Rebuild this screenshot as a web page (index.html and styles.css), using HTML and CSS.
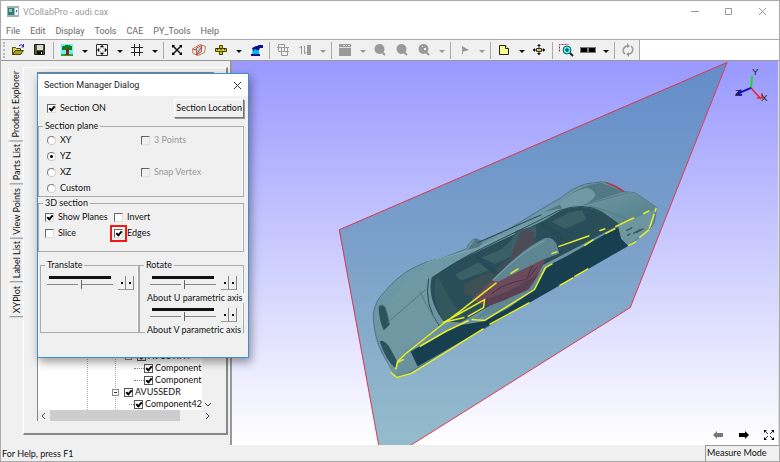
FILE: index.html
```html
<!DOCTYPE html>
<html lang="en">
<head>
<meta charset="utf-8">
<title>VCollabPro - audi.cax</title>
<link rel="stylesheet" href="styles.css">
</head>
<body>
<header class="titlebar">
  <svg class="app-icon" width="12" height="11" viewBox="0 0 12 11"><path fill="#9fb0bd" d="M0 0h12v11H0z"/><path fill="#2f7f78" d="M1 2h6v7H1z"/><path fill="#8fd0b0" d="M2 3h3v3H2z"/><path fill="#fff" d="M8 2h3v7H8z"/><path fill="#557" d="M9 4h1v2H9z"/></svg>
  <h1 class="app-title">VCollabPro - audi.cax</h1>
  <button class="win-btn" aria-label="Minimize"><svg width="9" height="9" viewBox="0 0 9 9"><path d="M1 4.500h8"/></svg></button>
  <button class="win-btn" aria-label="Maximize"><svg width="9" height="9" viewBox="0 0 9 9"><path d="M1.500 1.500h6v6h-6z"/></svg></button>
  <button class="win-btn" aria-label="Close"><svg width="9" height="9" viewBox="0 0 9 9"><path d="M1 1l7 7M8 1l-7 7"/></svg></button>
</header>
<nav class="menubar">
  <button>File</button><button>Edit</button><button>Display</button><button>Tools</button><button>CAE</button><button>PY_Tools</button><button>Help</button>
</nav>
<div class="toolrow">
<div class="toolbar" role="toolbar">
  <span class="grip"></span>
  <button class="tool" aria-label="Open"><svg width="14" height="14" viewBox="0 0 14 14"><path fill="#d8d060" stroke="#4c4a00" d="M1.500 11.500v-7h3l1 1h4v2h-5z"/><path fill="#a8a020" stroke="#4c4a00" d="M1.500 11.500l3-4h8l-3 4z"/><path fill="none" stroke="#22c" d="M8 3q2-3 4 0M12.500 1v3h-2"/></svg></button>
  <button class="tool" aria-label="Save"><svg width="14" height="14" viewBox="0 0 14 14"><path fill="#55552a" stroke="#222" d="M1.500 1.500h10v10h-10z"/><path fill="#d8d8d8" d="M4 2h6v5H4z"/><path fill="#111" d="M4 8h6v4H4z"/><path fill="#ddd" d="M8 9h1v2H8z"/></svg></button>
  <span class="sep"></span>
  <button class="tool" aria-label="Scene"><svg width="14" height="14" viewBox="0 0 14 14"><path fill="#62f4f4" d="M1 1h12v10H1z"/><path fill="#32a032" d="M1 11h12v2H1z"/><path fill="#177a17" d="M3 3h2V2h5v1h2v4H9V6H6v1H2V4z"/><path fill="#a01818" d="M6 6h3v6H5v-1h1z"/></svg></button>
  <button class="drop" aria-label="Scene options"></button>
  <button class="tool" aria-label="Fit view"><svg width="14" height="14" viewBox="0 0 14 14"><path fill="none" stroke="#333" d="M1.500 1.500h11v11h-11z"/><circle cx="7" cy="7" r="2.500" fill="#fff" stroke="#999"/><path d="M7 2l2 2H5zM7 12l2-2H5zM2 7l2-2v4zM12 7l-2-2v4z"/></svg></button>
  <button class="drop" aria-label="Fit options"></button>
  <button class="tool" aria-label="Grid"><svg width="14" height="14" viewBox="0 0 14 14"><path fill="none" stroke="#222" d="M4.500 1v12M9.500 1v12M1 4.500h12M1 9.500h12"/></svg></button>
  <button class="drop" aria-label="Grid options"></button>
  <span class="sep"></span>
  <button class="tool" aria-label="Explode"><svg width="14" height="14" viewBox="0 0 14 14"><path stroke="#111" stroke-width="1.500" d="M3 3l8 8M11 3l-8 8"/><path d="M2 2h3L2 5zM12 2H9l3 3zM2 12h3l-3-3zM12 12H9l3-3z"/></svg></button>
  <button class="tool" aria-label="Section"><svg width="16" height="14" viewBox="0 0 16 14"><path fill="#f6efdc" stroke="#a9805c" d="M1.500 6L9 1.500l5.500 2-1 6L7 12.500l-5-2z"/><path fill="#8deef4" d="M6 5l5-2v6l-5 3z"/><path fill="none" stroke="#e04040" d="M5.500 5l5-2.500v6l-5 3.500zM1.500 6l4 1M6 11l5-8"/></svg></button>
  <button class="tool" aria-label="Measure"><svg width="14" height="14" viewBox="0 0 14 14"><path fill="#d8d000" stroke="#444000" d="M1.500 5.500h11v3h-11z"/><path fill="#d8d000" stroke="#444000" d="M5.500 2.500h3v3h-3zM5.500 8.500h3v3h-3z"/><path stroke="#222" d="M3.500 5v2M7 5v2M10.500 5v2"/></svg></button>
  <button class="drop" aria-label="Measure options"></button>
  <button class="tool" aria-label="Probe"><svg width="14" height="14" viewBox="0 0 14 14"><path fill="#00b8f0" d="M4 6h6v5H3z"/><path fill="#10108c" d="M3 5l4-2h2V2h5v3h-3l-1 2H8L6 6 4 8zM2 11h9v2H2z"/></svg></button>
  <span class="sep"></span>
  <button class="tool" aria-label="Copy results" disabled><svg width="14" height="14" viewBox="0 0 14 14"><path fill="none" stroke="#9a9a9a" d="M2.500 1.500h6v7h-6zM5.500 4.500h6v8h-6zM1 4.500h12M4 8.500h9"/></svg></button>
  <button class="tool" aria-label="Legend" disabled><svg width="14" height="14" viewBox="0 0 14 14"><path fill="#9a9a9a" d="M9 2h4v10H9z"/><path fill="none" stroke="#9a9a9a" d="M3.500 3v8M6.500 3v8M1.500 5l2-2M6.500 11l2-2"/></svg></button>
  <button class="drop" aria-label="Legend options" disabled></button>
  <span class="sep"></span>
  <button class="tool" aria-label="Calendar" disabled><svg width="14" height="14" viewBox="0 0 14 14"><path fill="#9a9a9a" d="M1 1h12v12H1z"/><path stroke="#ddd" d="M5 2.500h2M8 2.500h1M10 2.500h2M1 4.500h12"/></svg></button>
  <button class="drop" aria-label="Calendar options" disabled></button>
  <button class="tool" aria-label="Find" disabled><svg width="14" height="14" viewBox="0 0 14 14"><circle cx="6.500" cy="6" r="5" fill="#9a9a9a"/><path stroke="#9a9a9a" stroke-width="2" d="M9 9l3 3"/></svg></button>
  <button class="tool" aria-label="Find next" disabled><svg width="14" height="14" viewBox="0 0 14 14"><circle cx="6.500" cy="6" r="5" fill="#9a9a9a"/><path stroke="#9a9a9a" stroke-width="2" d="M9 9l3 3"/></svg></button>
  <button class="tool" aria-label="Find hot spot" disabled><svg width="14" height="14" viewBox="0 0 14 14"><circle cx="6.500" cy="6" r="5" fill="#9a9a9a"/><path stroke="#9a9a9a" stroke-width="2" d="M9 9l3 3"/><path fill="#eee" d="M7 5h2v2H7zM5 3h1v1H5z"/></svg></button>
  <button class="drop" aria-label="Find options" disabled></button>
  <span class="sep"></span>
  <button class="tool" aria-label="Play" disabled><svg width="14" height="14" viewBox="0 0 14 14"><path fill="#9a9a9a" d="M5 3l7 4-7 2zM5 3h1v8H5z"/></svg></button>
  <button class="drop" aria-label="Play options" disabled></button>
  <span class="sep"></span>
  <button class="tool" aria-label="Note"><svg width="14" height="14" viewBox="0 0 14 14"><path fill="#ffff90" stroke="#222" d="M2.500 2.500h6l3 3v6h-9z"/><path fill="#fff" stroke="#222" d="M8.500 2.500v3h3"/></svg></button>
  <button class="drop" aria-label="Note options"></button>
  <button class="tool" aria-label="Move"><svg width="14" height="14" viewBox="0 0 14 14"><path stroke="#222" d="M7 2v10M1 7h12"/><path d="M7 1l2 2H5zM7 12l2-2H5zM1 7l2-2v4zM13 7l-2-2v4z"/><path fill="#d8c850" stroke="#333" d="M4.500 5.500h5v3h-5z"/></svg></button>
  <span class="sep"></span>
  <button class="tool" aria-label="Zoom window"><svg width="16" height="14" viewBox="0 0 16 14"><path fill="none" stroke="#803080" stroke-dasharray="2 1" d="M1.500 8.500v-7h9"/><circle cx="9" cy="7" r="4" fill="#50f0f0" stroke="#186060"/><path stroke="#124" d="M9 5v4M7 7h4"/><path stroke="#102060" stroke-width="2" d="M12 10l3 3"/></svg></button>
  <button class="tool" aria-label="Display bar"><svg width="18" height="14" viewBox="0 0 18 14"><path fill="#777" d="M1 4h16v6H1z"/><path d="M2 5h6v4H2zM10 5h6v4h-6z"/></svg></button>
  <button class="drop" aria-label="Display bar options"></button>
  <span class="sep"></span>
  <button class="tool" aria-label="Refresh" disabled><svg width="14" height="14" viewBox="0 0 14 14"><path fill="none" stroke="#999" stroke-width="1.500" d="M4 11a4.500 4.500 0 0 1 2-8M10 3a4.500 4.500 0 0 1-2 8"/><path fill="#999" d="M6 0l3 3-3 2zM8 9v5l-3-3z"/></svg></button>
</div>
</div>
<main class="workspace">
  <aside class="explorer">
    <div class="tabs" role="tablist">
      <button class="tab tab-active" role="tab">Product Explorer</button>
      <button class="tab" role="tab">Parts List</button>
      <button class="tab" role="tab">View Points</button>
      <button class="tab" role="tab">Label List</button>
      <button class="tab" role="tab">XYPlot</button>
    </div>
    <div class="tabpanel">
      <div class="treebox">
        <div class="tree">
          <div class="node branch"><span class="expander"></span><label><input type="checkbox" checked>AVUSTINT</label></div>
          <div class="node leaf"><label><input type="checkbox" checked>Component</label></div>
          <div class="node leaf"><label><input type="checkbox" checked>Component</label></div>
          <div class="node root"><span class="expander"></span><label><input type="checkbox" checked>AVUSSEDR</label></div>
          <div class="node child"><label><input type="checkbox" checked>Component42</label></div>
        </div>
        <div class="vscroll"><svg width="8" height="6" viewBox="0 0 8 6"><path d="M1 1l3 3 3-3"/></svg></div>
        <div class="hscroll"><svg width="6" height="8" viewBox="0 0 6 8"><path d="M4 1L1 4l3 3"/></svg><span class="thumb"></span><svg width="6" height="8" viewBox="0 0 6 8"><path d="M1 1l3 3-3 3"/></svg></div>
      </div>
    </div>
  </aside>
  <section class="viewport" aria-label="3D view">
    <svg class="scene" viewBox="232 61 547 385" preserveAspectRatio="xMinYMin slice">
      <defs>
        <linearGradient id="plane" x1="0" y1="0" x2="0" y2="1"><stop offset="0" stop-color="#638dca"/><stop offset=".5" stop-color="#7ca1ca"/><stop offset="1" stop-color="#95bccc"/></linearGradient>
        <linearGradient id="body" x1="0" y1="0" x2=".6" y2="1"><stop offset="0" stop-color="#5a8290"/><stop offset=".4" stop-color="#6e98a5"/><stop offset="1" stop-color="#648c98"/></linearGradient>
        <linearGradient id="rear" x1="0" y1="0" x2="1" y2="1"><stop offset="0" stop-color="#7096a4"/><stop offset="1" stop-color="#54808c"/></linearGradient>
      </defs>
      <path fill="url(#plane)" d="M339 230L728 62 631 308 411 446H379z"/>
      <path fill="none" stroke="#e03850" d="M379 446L339.500 230 728 62.500 631 308 411 446"/>
      <path fill="url(#body)" stroke="#456a7a" stroke-width=".8" d="M373.500 315Q375 301 386 291Q397 277 414 268Q427 261 441 259Q455 254 467 249Q470 241 476 239L483 242 510 229 541 210 560 199Q575 187 587 184L603 182 608 183 625 192 636 193Q648 201 657.500 208L655 223 650 230 629 246 500 320 421 367 405 376 396 378Q389 365 382 353Q374 337 373.500 315z"/>
      <path fill="#517985" d="M560 205Q576 186 602 183L625 192 587 204 560 209 545 212zM468 250L476 239 483 243 479 248z"/>
      <path fill="#7199a5" d="M560 204Q572 191 588 188Q604 194 587 204L563 209zM388 307Q405 279 430 268Q425 287 412 304L391 320z"/>
      <path fill="url(#rear)" d="M575 208L625 192 636 193 657 208 648 216 618 226Q600 210 575 208z"/>
      <path fill="#6f98a3" d="M374 314L427 281Q425 310 440 325L402 353 396 378Q375 343 374 314z"/>
      <path fill="#294e59" d="M432 278Q454 262 484 249L544 221 561 211Q581 204 597 210Q610 216 620 225L575 249 552 261 544 265 527 292 491 306 461 323 444 322Q427 300 432 278z"/>
      <path fill="#3a5f64" d="M456 275L478 263 485 261 493 270 461 281zM482 258L501 250Q514 241 516 231L536 226Q540 243 527 251L495 264zM552 222L569 213 583 210 587 220 566 229z"/>
      <path fill="#31595d" d="M439 278Q450 303 465 317L444 321Q432 300 436 280z"/>
      <path fill="#3d5056" d="M465 284L493 272 515 255 520 236 531 230 537 241 526 270 504 281 479 300 464 294z"/>
      <path fill="#4c4b58" d="M520 234Q528 225 535 234L531 254 518 262 508 266z"/>
      <path fill="#6c4a5b" d="M490 283L547 257 542 268 535 286 505 302 485 306 472 300z"/>
      <path fill="#5b4054" d="M480 302L508 292 538 275 534 288 509 300 487 306z"/>
      <path fill="none" stroke="#40364a" d="M533 266l-6 14M537 268l-8 10M492 294q14-11 34-14"/>
      <path fill="none" stroke="#244b57" stroke-width="4" d="M477 258L497 274M542 223L563 239"/>
      <path fill="#5d8692" d="M492 281Q523 249 544 239Q552 236 557 244L560 254 543 260 499 282z"/>
      <path fill="none" stroke="#81a6af" d="M494 280Q523 251 545 241M427 263L479 248 529 225 560 210"/>
      <path fill="none" stroke="#264955" d="M433 279Q454 262 484 248L529 226 559 211Q585 202 602 212L620 225M478 243L542 215M429 279Q424 305 440 327"/>
      <path fill="#173f50" d="M411 352L458 326 483 322 508 309 534 291 547 267 568 256 619 227 622 239 629 246 560 286 500 320 418 367z"/>
      <path fill="#5f8793" d="M490 307L529 290 546 265 553 263 548 267 535 290 502 311 472 321z"/>
      <path fill="#2b535d" d="M379 308Q380 303 386 308L390 325 384 331Q379 320 379 308zM380 342Q384 339 390 348L397 361 396 369Q386 361 380 342z"/>
      <path fill="none" stroke="#547a86" d="M388 323L426 290M381 307Q385 300 389 320M420 292Q429 310 438 324M585 205L629 193M590 206Q626 216 648 230"/>
      <path fill="#6d96a1" d="M619 227L651 211 655 220 650 229 629 246 622 239z"/>
      <path fill="none" stroke="#315965" stroke-width="1.500" d="M627 231l6-3M628 236l3-2M634 234l7-4M637 233l7-4"/>
      <path fill="none" stroke="#bd3045" stroke-width="1.500" d="M607 183L617 187 625 192"/>
      <g fill="none" stroke="#e6ed28" stroke-width="1.500">
        <path d="M396 370L398 362 405 355 440 327 460 312 497 283M511 274l8-5M391 373L397 378 412 374 484 329M490 325L530 303M560 286l14-8M575 277l14-8M398 363l6-3M420 347L446 332 469 321M472 320L485 321 535 290 546 268 553 264M444 323L485 300 484 308 468 317M443 323L465 318M552 254l6-2M559 247L590 236M585 246l9-6M600 231l6-2M606 234l10-5M616 227L635 218M644 214l6-3M657 208l-1 4M655 214l-5 15M629 246l8-4M640 238l10-8"/>
      </g>
      <g fill="none" stroke-width="1.500"><path stroke="#14dc28" stroke-width="2" d="M752 88l1-12"/><path stroke="#e22" d="M752 88l10 11M758 98h5v-5"/><path stroke="#1010c0" stroke-width="2" d="M752 88l-14 6M742 90l-4 4 5 1"/></g>
      <g class="axis"><text x="753" y="75">Y</text><text x="762" y="101">X</text><text x="736" y="96">Z</text></g>
    </svg>
    <div class="viewnav">
      <button aria-label="Previous"><svg width="12" height="10" viewBox="0 0 12 10"><path fill="#777" d="M1 5l4-4v2h6v4H5v2z"/></svg></button>
      <button aria-label="Next"><svg width="12" height="10" viewBox="0 0 12 10"><path d="M11 5L7 1v2H1v4h6v2z"/></svg></button>
      <button aria-label="Full screen"><svg width="10" height="10" viewBox="0 0 10 10"><path d="M0 0h3L0 3zM10 0v3L7 0zM0 10V7l3 3zM10 10H7l3-3z"/><path stroke="#333" d="M1 1l3 3M9 1L6 4M1 9l3-3M9 9L6 6"/></svg></button>
    </div>
  </section>
</main>
<footer class="statusbar"><span>For Help, press F1</span><span class="mode">Measure Mode</span></footer>

<div class="dialog" role="dialog" aria-labelledby="dlg-title">
  <div class="dialog-title"><h2 id="dlg-title">Section Manager Dialog</h2><button aria-label="Close dialog"><svg width="9" height="9" viewBox="0 0 9 9"><path d="M1 1l7 7M8 1l-7 7"/></svg></button></div>
  <div class="dialog-top">
    <label><input type="checkbox" checked>Section ON</label>
    <button class="push">Section Location</button>
  </div>
  <fieldset class="plane-group">
    <legend>Section plane</legend>
    <label><input type="radio" name="plane">XY</label>
    <label class="off"><input type="checkbox" disabled>3 Points</label>
    <label class="first"><input type="radio" name="plane" checked>YZ</label>
    <label class="first"><input type="radio" name="plane">XZ</label>
    <label class="off"><input type="checkbox" disabled>Snap Vertex</label>
    <label class="first"><input type="radio" name="plane">Custom</label>
  </fieldset>
  <fieldset class="section-group">
    <legend>3D section</legend>
    <label><input type="checkbox" checked>Show Planes</label>
    <label><input type="checkbox">Invert</label>
    <label><input type="checkbox">Slice</label>
    <label><span class="highlight"><input type="checkbox" checked></span>Edges</label>
  </fieldset>
  <div class="moves">
    <fieldset class="translate">
      <legend>Translate</legend>
      <div class="slide"><input type="range" aria-label="Translate"><button class="spin" aria-label="Translate back"></button><button class="spin" aria-label="Translate forward"></button></div>
    </fieldset>
    <fieldset class="rotate">
      <legend>Rotate</legend>
      <div class="slide"><input type="range" id="rot-u"><button class="spin" aria-label="U back"></button><button class="spin" aria-label="U forward"></button></div>
      <label class="caption" for="rot-u">About U parametric axis</label>
      <div class="slide"><input type="range" id="rot-v"><button class="spin" aria-label="V back"></button><button class="spin" aria-label="V forward"></button></div>
      <label class="caption" for="rot-v">About V parametric axis</label>
    </fieldset>
  </div>
</div>
</body>
</html>
```
FILE: styles.css
```css
*, *::before, *::after { box-sizing: border-box; }
body {
  margin: 0;
  height: 100vh;
  display: flex;
  flex-direction: column;
  overflow: hidden;
  border: 1px solid #aaa;
  background: #fff;
  color: #111;
  font: 9px/12px Lato, "Liberation Sans", sans-serif;
}
button { font: inherit; color: inherit; background: none; border: 0; padding: 0; }
h1, h2 { margin: 0; font: inherit; }

.titlebar { display: flex; align-items: center; height: 21px; padding-left: 6px; flex: none; }
.app-title { flex: 1; margin-left: 4px; color: #999; font: 9px/14px Roboto, sans-serif; }
.win-btn { width: 34px; height: 21px; }
.win-btn svg { display: block; margin: auto; fill: none; stroke: #999; }

.menubar { display: flex; gap: 10px; height: 17px; padding-left: 5px; flex: none; color: #666; font: 9px/19px Roboto, sans-serif; }

.toolrow { display: flex; flex: none; height: 22px; border-top: 1px solid #aaa; border-bottom: 1px solid #999; }
.toolbar { display: flex; align-items: center; background: #f0f0f0; border-right: 1px solid #aaa; }
.grip { width: 2px; height: 16px; margin: 0 2px; border-left: 2px dotted #bbb; }
.tool { width: 22px; height: 20px; }
.tool svg { display: block; margin: auto; }
.drop { width: 13px; height: 20px; }
.drop::after { content: ""; display: block; width: 6px; margin: 2px auto 0; border: 3px solid transparent; border-top-color: #111; border-bottom: 0; }
.drop:disabled::after { border-top-color: #999; }
.sep { width: 1px; height: 17px; margin: 0 2px; background: #aaa; }

.workspace { flex: 1; display: flex; min-height: 0; }
.explorer { display: flex; flex: none; width: 231px; padding: 6px 2px 10px 7px; background: #f0f0f0; border-right: 2px solid #999; }
.tabs { display: flex; flex-direction: column; align-items: flex-end; width: 15px; flex: none; }
.tab { writing-mode: vertical-rl; transform: rotate(180deg); width: 14px; padding: 3px 0; line-height: 12px; text-align: left; border-top: 1px solid #888; border-right: 1px solid #fff; }
.tab-active { width: 15px; padding-bottom: 4px; }
.tabpanel { flex: 1; padding: 4px 12px 12px 13px; border: solid #fff; border-width: 1px 2px 2px 1px; border-right-color: #888; border-bottom-color: #888; }
.treebox { display: grid; grid-template: 1fr 11px / 1fr 12px; height: 100%; border-left: 1px solid #888; border-top: 1px solid #888; }
.tree { display: flex; flex-direction: column; justify-content: flex-end; min-width: 0; overflow: hidden; background: repeating-linear-gradient(#aaa 0 1px, #fff 1px 2px) 49px 0 / 1px 100% no-repeat, repeating-linear-gradient(#aaa 0 1px, #fff 1px 2px) 77px 0 / 1px 100% no-repeat #fff; }
.node { display: flex; align-items: center; height: 12px; flex: none; white-space: nowrap; }
.node label { display: flex; align-items: center; gap: 2px; }
.branch { padding-left: 87px; }
.leaf { padding-left: 96px; }
.leaf::before { content: ""; width: 10px; flex: none; border-top: 1px dotted #888; }
.root { padding-left: 74px; }
.child { padding-left: 91px; }
.child::before { content: ""; width: 5px; flex: none; border-top: 1px dotted #888; }
.expander { width: 7px; height: 7px; margin-right: 5px; border: 1px solid #888; background: linear-gradient(#333, #333) center / 3px 1px no-repeat #fff; }
.vscroll { display: flex; align-items: flex-end; justify-content: center; padding-bottom: 2px; }
.hscroll { grid-column: 1 / 3; display: flex; align-items: center; justify-content: space-between; padding: 0 3px; gap: 3px; }
.thumb { flex: 1; height: 11px; margin-right: 22px; background: #cdcdcd; }
.vscroll svg, .hscroll svg { flex: none; fill: none; stroke: #444; }

.viewport { position: relative; flex: 1; min-width: 0; overflow: hidden; border-right: 1px solid #ddd; background: linear-gradient(#9999ff, #fff); }
.scene { display: block; width: 100%; height: 100%; }
.axis text { font: 10px "Liberation Sans", sans-serif; fill: #222; }
.viewnav { position: absolute; right: 4px; bottom: 5px; display: flex; align-items: center; gap: 14px; }
.viewnav svg { display: block; }

.statusbar { display: flex; justify-content: space-between; flex: none; height: 16px; padding-left: 1px; background: #f0f0f0; line-height: 18px; }
.mode { width: 74px; padding-left: 1px; border-top: 1px solid #999; border-left: 1px solid #999; line-height: 13px; }

.dialog { position: absolute; left: 37px; top: 73px; width: 212px; padding-bottom: 24px; background: #f0f0f0; border: 1px solid #3a8fd0; box-shadow: 2px 4px 9px rgba(0, 0, 0, .4); }
.dialog-title { display: flex; align-items: center; justify-content: space-between; height: 22px; padding: 0 6px; background: #fff; color: #222; font: 9px/14px Roboto, sans-serif; }
.dialog-title svg { display: block; fill: none; stroke: #333; }
.dialog-top { display: flex; align-items: center; justify-content: space-between; height: 24px; padding: 0 4px 0 9px; }
.dialog label { display: flex; align-items: center; gap: 4px; white-space: nowrap; }
.push { height: 19px; padding: 0 1px; border: 1px solid; border-color: #fff #777 #777 #fff; box-shadow: 1px 1px 0 #999; }

input[type="checkbox"], input[type="radio"] { appearance: none; flex: none; width: 9px; height: 9px; margin: 0; background: #fff; border: 1px solid; border-color: #666 #ddd #ddd #666; }
input[type="radio"] { border-radius: 50%; border-color: #777 #ccc #ccc #777; }
input[type="radio"]:checked { background: radial-gradient(circle, #000 0 1px, #fff 2px); }
input[type="checkbox"]:checked { position: relative; }
input[type="checkbox"]:checked::after { content: ""; position: absolute; left: 2px; top: 0; width: 4px; height: 6px; border: solid #000; border-width: 0 2px 2px 0; transform: rotate(42deg); }
.node input[type="checkbox"] { border-color: #555; }
input[type="checkbox"]:disabled { background: #f0f0f0; }
.off { color: #999; }

fieldset { min-width: 0; margin: 0 4px 0 0; padding: 0; border: 1px solid #aaa; box-shadow: inset -1px 0 0 #fff; }
legend { margin-left: 4px; padding: 0 2px; height: 12px; }
.plane-group { display: grid; grid-template-columns: 94px 1fr; grid-auto-rows: 16px; height: 77px; padding-left: 8px; }
.plane-group legend { margin-left: -4px; }
.first { grid-column: 1; }
.section-group { display: grid; grid-template-columns: 69px 1fr; grid-auto-rows: 16px; height: 55px; padding-left: 6px; }
.section-group legend { margin-left: -2px; }
.highlight { display: flex; margin: 0 -4px; padding: 2px; border: 2px solid #f01818; }

.moves { display: grid; grid-template-columns: 99px 1fr; margin: 7px 4px 0 2px; }
.moves fieldset { height: 74px; margin: 0; }
.slide { display: flex; align-items: center; height: 22px; padding: 2px 0 0 6px; }
.rotate .slide { padding-left: 10px; }
.slide input { appearance: none; width: 66px; height: 14px; margin: 0 5px 0 0; background: linear-gradient(#111, #111) 2px 0 / 62px 3px no-repeat, linear-gradient(#888, #888) 0 8px / 66px 1px no-repeat; }
.slide input::-webkit-slider-thumb { appearance: none; width: 4px; height: 9px; margin-top: 3px; background: #f0f0f0; border-right: 1px solid #666; }
.spin { width: 8px; height: 14px; border-right: 1px solid #888; border-bottom: 1px solid #999; }
.spin::after { content: ""; display: block; width: 2px; height: 2px; margin: auto; background: #111; }
.rotate .caption { position: relative; width: max-content; height: 10px; margin-left: 5px; padding: 0 2px; background: #f0f0f0; }
```
